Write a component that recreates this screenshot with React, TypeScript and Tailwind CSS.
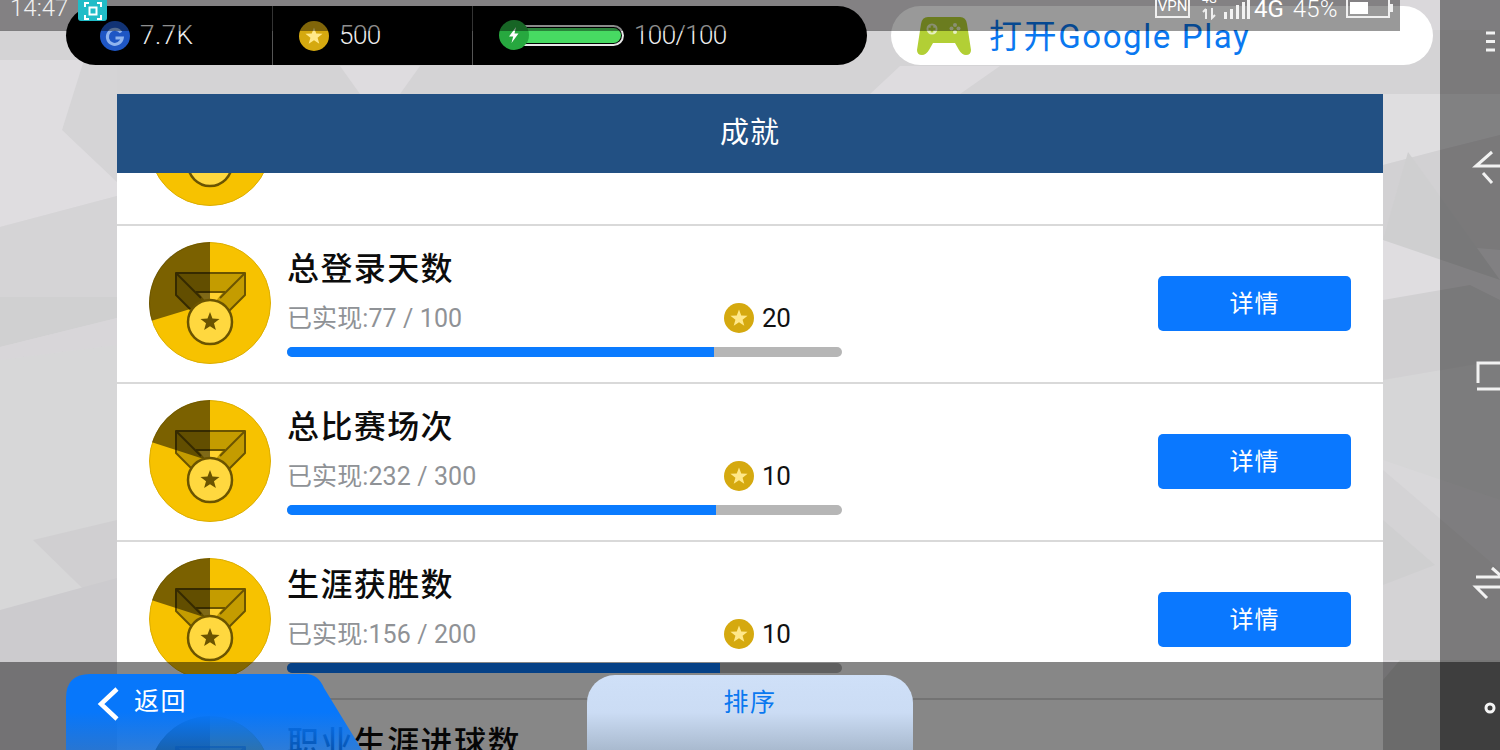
import React from "react";

const FONT = "font-['Roboto','Noto_Sans_CJK_SC',sans-serif]";

function Star({ cx, cy, r, fill }: { cx: number; cy: number; r: number; fill: string }) {
  const pts: string[] = [];
  for (let i = 0; i < 10; i++) {
    const rad = i % 2 === 0 ? r : r * 0.42;
    const a = (Math.PI / 5) * i - Math.PI / 2;
    pts.push(`${(cx + rad * Math.cos(a)).toFixed(2)},${(cy + rad * Math.sin(a)).toFixed(2)}`);
  }
  return <polygon points={pts.join(" ")} fill={fill} />;
}

function Medal({ angle }: { angle: number }) {
  const a = (angle * Math.PI) / 180;
  const x = 61 + 61 * Math.sin(a);
  const y = 61 - 61 * Math.cos(a);
  const ink = "#6b5400";
  return (
    <svg width="122" height="122" viewBox="0 0 122 122" className="shrink-0">
      <circle cx="61" cy="61" r="60.5" fill="#f7c200" stroke="#dcae00" strokeWidth="1" />
      <polygon points="27,31 96,31 96,53 79,70 44,70 27,53" fill="#c49c00" stroke={ink} strokeWidth="2" strokeLinejoin="round" />
      <polygon points="49,50 74,50 66,60 57,60" fill="#ffd22e" />
      <line x1="27" y1="31" x2="52" y2="56" stroke={ink} strokeWidth="2" />
      <line x1="96" y1="31" x2="71" y2="56" stroke={ink} strokeWidth="2" />
      <line x1="47" y1="50" x2="76" y2="50" stroke={ink} strokeWidth="2" />
      <path d={`M61 61 L${x.toFixed(2)} ${y.toFixed(2)} A61 61 0 ${360 - angle > 180 ? 1 : 0} 1 61 0 Z`} fill="#000000" fillOpacity="0.5" />
      <circle cx="61" cy="80" r="22" fill="#ffd83f" stroke={ink} strokeWidth="2.5" />
      <Star cx={61} cy={80} r={10} fill={ink} />
    </svg>
  );
}

function Coin({ size = 30 }: { size?: number }) {
  return (
    <svg width={size} height={size} viewBox="0 0 30 30" className="shrink-0">
      <circle cx="15" cy="15" r="15" fill="#d5a90f" />
      <Star cx={15} cy={15.5} r={9} fill="#ffe88a" />
    </svg>
  );
}

function GCoin() {
  return (
    <svg width="30" height="30" viewBox="0 0 30 30" className="shrink-0">
      <circle cx="15" cy="15" r="15" fill="#1e56c4" />
      <path d="M21 11.5 A7.5 7.5 0 1 0 22.3 17 H15.5" fill="none" stroke="#8fb4ee" strokeWidth="3" />
    </svg>
  );
}

function EnergyBar() {
  return (
    <div className="relative flex h-[21px] w-[125px] items-center">
      <div className="ml-[14px] flex h-[21px] w-[111px] items-center rounded-r-full border-2 border-l-0 border-[#e8e8e8] py-[1px] pr-[1px]">
        <div className="h-full w-full rounded-r-full bg-[#47da62]" />
      </div>
      <svg width="30" height="30" viewBox="0 0 30 30" className="absolute left-0 top-[-5px]">
        <circle cx="15" cy="15" r="15" fill="#27a83f" />
        <polygon points="17,7 10,16.5 14.2,16.5 12.5,23 19.5,13.5 15.5,13.5" fill="#ffffff" />
      </svg>
    </div>
  );
}

function Row({
  title,
  done,
  reward,
  pct,
  angle,
}: {
  title?: string;
  done?: string;
  reward?: number;
  pct?: number;
  angle: number;
}) {
  return (
    <div className="flex h-[158px] shrink-0 items-start border-b-2 border-[#d9d9d9] bg-white pl-[32px] pr-[32px] pt-[16px]">
      <Medal angle={angle} />
      {title && (
        <div className="ml-[16px] flex w-[555px] flex-col">
          <div className="flex h-[53px] items-center text-[32px] font-medium leading-none tracking-[1.4px] text-[#0c0c0c]">{title}</div>
          {done && (
            <>
              <div className="mt-[5px] flex h-[36px] items-center">
                <span className="w-[437px] text-[25px] font-normal leading-none tracking-[0.1px] text-[#8f9296]">已实现:{done}</span>
                <Coin />
                <span className="ml-[8px] text-[26px] font-normal leading-none tracking-[-0.3px] text-[#111]">{reward}</span>
              </div>
              <div className="mt-[11px] h-[10px] w-[555px] overflow-hidden rounded-full bg-[#b6b6b6]">
                <div className="h-full bg-[#0a7bff]" style={{ width: `${pct}%` }} />
              </div>
            </>
          )}
        </div>
      )}
      {done && (
        <button className="ml-auto mt-[34px] h-[55px] w-[193px] rounded-[5px] bg-[#0a78ff] text-[24px] tracking-[1px] text-white">详情</button>
      )}
    </div>
  );
}

export default function App() {
  return (
    <div className={`relative h-[750px] w-[1500px] overflow-hidden bg-[#dad8db] ${FONT}`}>
      {/* polygon wallpaper */}
      <svg width="1500" height="750" viewBox="0 0 1500 750" className="absolute left-0 top-0">
        <polygon points="0,30 1500,30 1500,94 0,94" fill="#d4d3d5" />
        <polygon points="0,60 80,60 62,130 117,185 117,94 117,60" fill="#d5d4d6" />
        <polygon points="0,60 84,60 62,130 117,182 117,196 0,227" fill="#dfdde0" />
        <polygon points="0,227 117,196 117,318 0,347" fill="#d5d4d6" />
        <polygon points="0,297 117,297 117,318 0,347" fill="#d0d0d1" />
        <polygon points="0,347 117,318 117,345 0,360" fill="#d8d6d9" />
        <polygon points="0,360 117,345 117,660 0,660" fill="#d7d7d8" />
        <polygon points="33,540 117,520 117,622" fill="#d0cfd1" />
        <polygon points="0,610 117,578 117,662 0,662" fill="#cccbce" />
        <polygon points="340,66 420,66 400,94 360,94" fill="#dedcdf" />
        <polygon points="900,66 1000,66 960,94 870,94" fill="#dedcdf" />
        <polygon points="1383,94 1440,94 1440,660 1383,660" fill="#d9d8da" />
        <polygon points="1383,94 1500,94 1500,135 1383,165" fill="#dfdee0" />
        <polygon points="1383,240 1500,190 1500,330 1383,300" fill="#dfdde0" />
        <polygon points="1383,165 1440,150 1500,135 1500,250 1383,240" fill="#d2d1d3" />
        <polygon points="1408,152 1500,280 1383,240" fill="#cfcfd0" />
        <polygon points="1383,300 1470,285 1500,300 1500,440 1383,380" fill="#d1d0d2" />
        <polygon points="1383,380 1500,360 1500,500 1383,460" fill="#d6d6d7" />
        <polygon points="1383,470 1500,570 1500,660 1383,660" fill="#d4d3d5" />
        <polygon points="1383,520 1435,565 1383,585" fill="#cfcfd0" />
        <polygon points="1400,660 1500,660 1500,750 1383,750 1383,680" fill="#cbcbcb" />
      </svg>

      {/* page */}
      <div className="relative flex h-full flex-col">
        <div className="mt-[6px] flex h-[59px] shrink-0 pl-[66px]">
          <div className="flex h-[59px] w-[801px] rounded-[30px] bg-black text-[26px] font-light text-[#ededed]">
            <div className="flex w-[207px] items-center border-r border-[#555] pl-[34px]">
              <GCoin />
              <span className="ml-[10px] tracking-[0.5px]">7.7K</span>
            </div>
            <div className="flex w-[200px] items-center border-r border-[#555] pl-[26px]">
              <Coin />
              <span className="ml-[10px] tracking-[-0.5px]">500</span>
            </div>
            <div className="flex items-center pl-[26px]">
              <EnergyBar />
              <span className="ml-[10px] tracking-[-0.6px]">100/100</span>
            </div>
          </div>
          <div className="ml-[24px] flex h-[59px] w-[542px] items-center rounded-full bg-white pl-[26px]">
            <svg width="54" height="38" viewBox="0 0 54 38" className="shrink-0">
              <path
                d="M11 0 H43 Q49 0 50 7 L54 33 Q54 38 49 38 Q45 38 42 33 L38 26 H16 L12 33 Q9 38 5 38 Q0 38 0 33 L4 7 Q5 0 11 0 Z"
                fill="#b2cf35"
              />
              <circle cx="15" cy="12" r="5.5" fill="#e6efc0" />
              <rect x="13.7" y="8.5" width="2.6" height="7" fill="#b2cf35" />
              <rect x="11.5" y="10.7" width="7" height="2.6" fill="#b2cf35" />
              <circle cx="38" cy="8" r="2" fill="#e6efc0" />
              <circle cx="38" cy="15" r="2" fill="#e6efc0" />
              <circle cx="34.5" cy="11.5" r="2" fill="#e6efc0" />
              <circle cx="41.5" cy="11.5" r="2" fill="#e6efc0" />
            </svg>
            <span className="ml-[18px] mt-[2px] text-[33px] leading-none tracking-[1.6px] text-[#0a78f0]">打开Google Play</span>
          </div>
        </div>

        <div className="ml-[117px] mt-[29px] flex w-[1266px] flex-1 flex-col overflow-hidden">
          <div className="relative z-10 flex h-[79px] shrink-0 items-center justify-center bg-[#225083] text-[29px] font-normal tracking-[1px] text-white">成就</div>
          <div className="mt-[-105px] flex flex-col">
            <Row angle={288} />
            <Row title="总登录天数" done="77 / 100" reward={20} pct={77} angle={253} />
            <Row title="总比赛场次" done="232 / 300" reward={10} pct={77.3} angle={288} />
            <Row title="生涯获胜数" done="156 / 200" reward={10} pct={78} angle={288} />
            <Row title="职业生涯进球数" angle={288} />
          </div>
        </div>
      </div>

      {/* right nav bar */}
      <div className="absolute right-0 top-0 h-full w-[60px] bg-black/42">
        <svg width="60" height="750" viewBox="0 0 60 750" fill="none" stroke="#f2f2f2" strokeWidth="3">
          <path d="M46 33 H55 M46 41.5 H55 M46 50 H55" />
          <path d="M60 166 H36 L52 152 M43 173 L52 183" />
          <path d="M60 363 H38 V383 M37 389 H60" />
          <path d="M36 577 H60 M52 568 L60 575 M60 587 H36 L47 598" />
        </svg>
      </div>

      {/* top status bar */}
      <div className="absolute left-0 top-0 h-[31px] w-[1400px] bg-black/40" />
      <div className="absolute left-[10px] top-[-7px] text-[24px] font-light leading-[30px] text-[#f0f0f0]">14:47</div>
      <div className="absolute left-[78px] top-0 flex h-[21px] w-[29px] items-center justify-center rounded-b-[3px] bg-[#21bcc7]">
        <svg width="18" height="18" viewBox="0 0 18 18" fill="none" stroke="#fff" strokeWidth="2">
          <path d="M1 5 V1 H5 M13 1 H17 V5 M1 13 V17 H5 M13 17 H17 V13" />
          <rect x="5.5" y="5.5" width="7" height="7" />
        </svg>
      </div>
      <div className="absolute left-[1155px] top-[-8px] flex h-[28px] items-center text-white">
        <span className="flex h-[24px] w-[35px] items-end justify-center border-2 border-[#f0f0f0] text-[15px] leading-[20px]">VPN</span>
        <div className="relative ml-[12px] h-[28px] w-[14px]">
          <span className="absolute left-0 top-0 text-[12px] leading-[14px]">4G</span>
          <svg width="14" height="12" viewBox="0 0 14 12" className="absolute left-0 top-[16px]" fill="none" stroke="#eee" strokeWidth="2">
            <path d="M4 11 V1 M1 4 L4 1 M10 0 V10 L13 7" />
          </svg>
        </div>
        <svg width="26" height="20" viewBox="0 0 26 20" className="ml-[8px] mt-[6px]" fill="#f2f2f2">
          <rect x="0" y="13" width="3" height="7" />
          <rect x="6" y="10" width="3" height="10" />
          <rect x="12" y="6" width="3" height="14" />
          <rect x="18" y="3" width="3" height="17" />
          <rect x="23" y="0" width="3" height="20" />
        </svg>
        <span className="ml-[4px] mt-[6px] text-[24px] leading-none">4G</span>
        <span className="ml-[9px] mt-[6px] text-[24px] font-light leading-none tracking-[0.2px]">45%</span>
        <div className="ml-[8px] mt-[4px] flex h-[20px] w-[44px] items-center border-2 border-[#f0f0f0] p-[2px]">
          <div className="h-full w-[18px] bg-white" />
        </div>
        <div className="mt-[4px] h-[8px] w-[3px] bg-[#f0f0f0]" />
      </div>

      {/* bottom tool bar */}
      <div className="absolute bottom-0 left-0 h-[88px] w-full bg-black/47">
        <div className="relative flex h-full items-end pl-[66px]">
          <div className="flex h-[76px] w-[296px] items-start bg-gradient-to-b from-[#0777fb] via-[#0777fb] to-[#0777fb]/70 pl-[30px] pt-[12px] [clip-path:path('M0_76V24Q0_0_24_0H240Q252_0_258_14L296_76Z')]">
            <svg width="24" height="34" viewBox="0 0 24 34" fill="none" stroke="#fff" strokeWidth="4.5" className="mt-[1px]">
              <path d="M21 2 L5 17 L21 32" />
            </svg>
            <span className="ml-[14px] text-[25px] leading-[32px] tracking-[1.5px] text-white">返回</span>
          </div>
          <div className="ml-[225px] flex h-[75px] w-[326px] justify-center rounded-t-[28px] bg-gradient-to-b from-[#cfe0f8] via-[#cbdcf4] to-[#a9bacf] pt-[12px]">
            <span className="text-[25px] leading-[32px] tracking-[1.5px] text-[#0a78f0]">排序</span>
          </div>
        </div>
      </div>

      {/* home dot sits above the dim layer */}
      <svg width="12" height="12" viewBox="0 0 12 12" className="absolute left-[1484px] top-[702px]" fill="none" stroke="#f5f5f5" strokeWidth="3">
        <circle cx="6" cy="6" r="4" />
      </svg>
    </div>
  );
}
